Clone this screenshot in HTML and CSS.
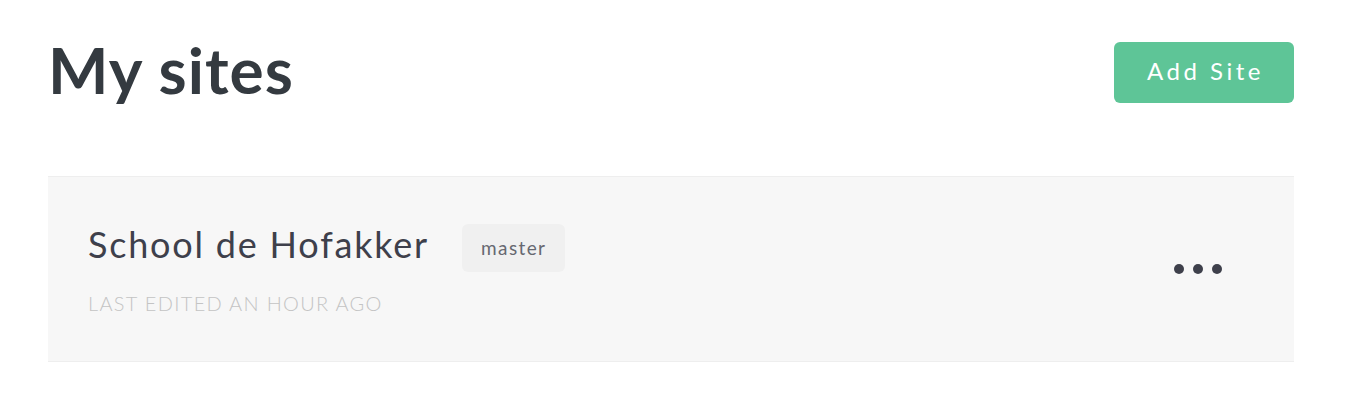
FILE: index.html
```html
<!DOCTYPE html>
<html>
<head>
<meta charset="utf-8">
<link rel="stylesheet" href="styles.css">
</head>
<body>
<div class="page">
  <header class="header">
    <h1 class="title">My sites</h1>
    <button class="add-btn">Add Site</button>
  </header>
  <div class="site-card">
    <div class="site-info">
      <div class="site-top">
        <span class="site-name">School de Hofakker</span>
        <span class="badge">master</span>
      </div>
      <div class="site-meta">Last edited an hour ago</div>
    </div>
    <div class="dots"><span></span><span></span><span></span></div>
  </div>
</div>
</body>
</html>
```
FILE: styles.css
```css
html, body {
  margin: 0;
  padding: 0;
  background: #fff;
}
body {
  font-family: Lato, "Noto Sans", sans-serif;
  color: #343a40;
}
.page {
  padding: 0 76px 0 48px;
}
.header {
  display: flex;
  justify-content: space-between;
  align-items: flex-start;
  height: 176px;
}
.title {
  margin: 30px 0 0 0;
  font-size: 64px;
  font-weight: 700;
  line-height: 80px;
  color: #343a40;
  letter-spacing: 1px;
}
.add-btn {
  margin-top: 42px;
  width: 180px;
  height: 61px;
  border: none;
  border-radius: 6px;
  background: #5ec597;
  color: #fff;
  font-family: Lato, "Noto Sans", sans-serif;
  font-size: 24px;
  letter-spacing: 3.5px;
  padding: 0 0 5px 3px;
}
.site-card {
  display: flex;
  align-items: flex-start;
  justify-content: space-between;
  background: #f7f7f7;
  border-top: 1px solid #eeeeee;
  border-bottom: 1px solid #eeeeee;
  height: 186px;
  box-sizing: border-box;
  padding: 45px 72px 0 40px;
}
.site-info {
  display: flex;
  flex-direction: column;
  gap: 17px;
}
.site-top {
  display: flex;
  align-items: center;
  gap: 33px;
}
.site-name {
  font-size: 36px;
  color: #3e404b;
  letter-spacing: 1.8px;
  margin-bottom: 8px;
}
.badge {
  background: #f0f0f0;
  border-radius: 6px;
  height: 48px;
  line-height: 48px;
  padding: 0 19px;
  font-size: 19px;
  letter-spacing: 1.4px;
  color: #666870;
}
.site-meta {
  text-transform: uppercase;
  font-size: 20px;
  font-weight: 300;
  letter-spacing: 1.3px;
  color: #c4c4c4;
}
.dots {
  display: flex;
  gap: 9px;
  align-self: center;
  margin-top: -45px;
}
.dots span {
  width: 10px;
  height: 10px;
  border-radius: 50%;
  background: #3e404b;
}
```
